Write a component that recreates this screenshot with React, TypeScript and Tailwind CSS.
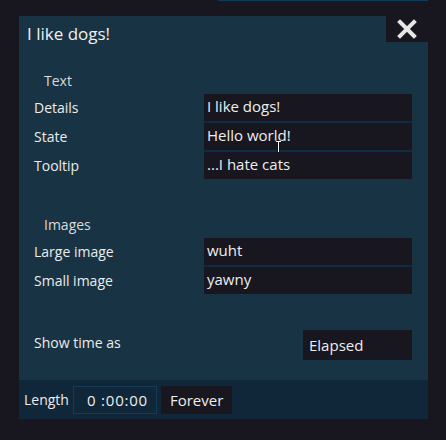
import React from "react";

const font = { fontFamily: '"Open Sans", "Noto Sans", sans-serif' };

function Row({ label }: { label: string }) {
  return (
    <div className="h-[27px] leading-[27px] text-[14px] text-[#ececec]">{label}</div>
  );
}

function Field({ value, children }: { value: string; children?: React.ReactNode }) {
  return (
    <div className="relative h-[27px] bg-[#18171f] pl-[3px] text-[15px] leading-[25px] text-[#eeeeee]">
      {value}
      {children}
    </div>
  );
}

function Section({
  title,
  rows,
  top,
}: {
  title: string;
  rows: { label: string; value: string; cursor?: boolean }[];
  top: string;
}) {
  return (
    <div className={top}>
      <div className="pl-[25px] text-[14px] leading-[20px] text-[#dadada]">{title}</div>
      <div className="mt-[3px] flex pl-[15px] pr-[16px]">
        <div className="flex flex-1 flex-col gap-[2px]">
          {rows.map((r) => (
            <Row key={r.label} label={r.label} />
          ))}
        </div>
        <div className="flex w-[208px] flex-col gap-[2px] bg-[#0f2d45]">
          {rows.map((r) => (
            <Field key={r.label} value={r.value}>
              {r.cursor ? (
                <svg
                  className="absolute left-[70px] top-[17px]"
                  width="9"
                  height="16"
                  viewBox="0 0 9 16"
                >
                  <path
                    d="M1.5 1.5h6M4.5 1.5v13M1.5 14.5h6"
                    stroke="#000"
                    strokeWidth="3"
                    fill="none"
                    opacity="0.35"
                  />
                  <path d="M2 1.5h5M4.5 1.5v13M2 14.5h5" stroke="#fff" strokeWidth="1" fill="none" />
                </svg>
              ) : null}
            </Field>
          ))}
        </div>
      </div>
    </div>
  );
}

export default function App() {
  return (
    <div className="relative h-[440px] w-[446px] overflow-hidden bg-[#18171f]" style={font}>
      <div className="ml-[218px] h-[1px] w-[210px] bg-[#103a5a]" />
      <div className="ml-[19px] mt-[15px] flex h-[403px] w-[409px] flex-col bg-[#183343]">
        <div className="flex h-[26px] items-start justify-between">
          <div className="pt-[5px] pl-[8px] text-[17px] leading-[26px] text-[#f0f0f0]">I like dogs!</div>
          <div className="flex h-[26px] w-[42px] items-center justify-center bg-[#18171f]">
            <svg width="20" height="20" viewBox="0 0 20 20">
              <path d="M3 3L17 17M17 3L3 17" stroke="#e6e6e6" strokeWidth="4" strokeLinecap="square" />
            </svg>
          </div>
        </div>

        <Section
          title="Text"
          top="mt-[29px]"
          rows={[
            { label: "Details", value: "I like dogs!" },
            { label: "State", value: "Hello world!", cursor: true },
            { label: "Tooltip", value: "...I hate cats" },
          ]}
        />

        <Section
          title="Images"
          top="mt-[36px]"
          rows={[
            { label: "Large image", value: "wuht" },
            { label: "Small image", value: "yawny" },
          ]}
        />

        <div className="mt-[36px] flex h-[30px] items-start justify-between pl-[15px] pr-[16px]">
          <div className="text-[14px] leading-[26px] text-[#ececec]">Show time as</div>
          <div className="h-[30px] w-[109px] bg-[#18171f] pl-[6px] text-[15px] leading-[30px] text-[#eeeeee]">
            Elapsed
          </div>
        </div>

        <div className="mt-auto flex h-[39px] items-center gap-[4px] bg-[#0f2739] pl-[5px]">
          <div className="text-[14px] leading-[20px] text-[#ececec]">Length</div>
          <div className="h-[28px] w-[84px] border border-[#173b57] pl-[13px] text-[15px] leading-[26px] tracking-[0.8px] text-[#eeeeee]">
            0 :00:00
          </div>
          <div className="h-[28px] bg-[#18171f] px-[9px] text-[15px] leading-[28px] text-[#eeeeee]">
            Forever
          </div>
        </div>
      </div>
    </div>
  );
}
